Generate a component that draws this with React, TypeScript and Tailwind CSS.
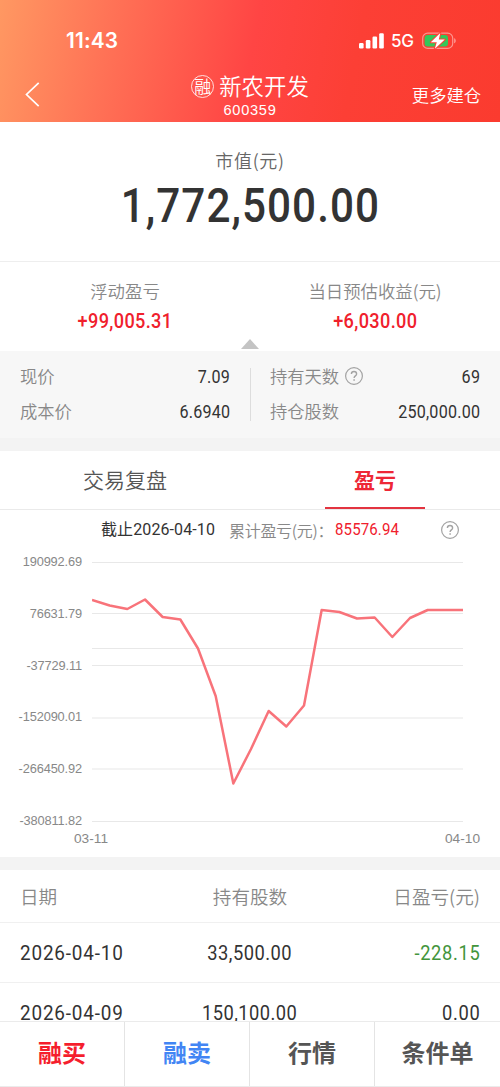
import type { ReactNode } from "react";

const CJK = "font-['Noto_Sans_CJK_SC',sans-serif]";
const NUM = "font-['Roboto','Noto_Sans_CJK_SC',sans-serif]";
const ARIAL = "font-['Liberation_Sans',sans-serif]";

function StatusBar() {
  return (
    <div className="flex h-[62px] items-start justify-between pl-[66px] pr-[43px] pt-[29px]">
      <span className="font-['Inter',sans-serif] text-[20.800px] font-semibold leading-6 tracking-[0.200px]">11:43</span>
      <div className="flex h-6 items-center">
        <svg width="25" height="16" viewBox="0 0 25 16" fill="white">
          <rect x="0" y="10" width="4.6" height="5.5" rx="1.2" />
          <rect x="6.8" y="7" width="4.6" height="8.5" rx="1.2" />
          <rect x="13.5" y="3.6" width="4.6" height="11.9" rx="1.2" />
          <rect x="20.2" y="0.2" width="4.6" height="15.3" rx="1.2" />
        </svg>
        <span className="ml-[7px] w-[25px] font-['Inter',sans-serif] text-[17px] font-medium leading-6 tracking-[-0.3px]">5G</span>
        <svg className="ml-[6px]" width="35" height="18" viewBox="0 0 35 18">
          <rect x="0.7" y="1.2" width="30" height="15.2" rx="5" fill="none" stroke="white" strokeOpacity="0.45" strokeWidth="1.2" />
          <path d="M32.2 6.3c2 .6 2 4.400 0 5z" fill="white" fillOpacity="0.5" />
          <rect x="2.600" y="3.100" width="23.400" height="11.400" rx="3.200" fill="#34c759" />
          <path d="M18.300 1 8.800 10.200h6L12.800 16.800 22.800 7.500h-6z" fill="white" stroke="#fb4238" strokeWidth="2" paintOrder="stroke" strokeLinejoin="round" />
        </svg>
      </div>
    </div>
  );
}

function Header() {
  return (
    <header className="h-[122px] bg-[linear-gradient(101deg,#ff9862_0%,#ff7256_22%,#ff4544_50%,#fc3f35_70%,#fb3b2f_100%)] text-white">
      <StatusBar />
      <div className="grid h-[60px] grid-cols-[120px_1fr_120px]">
        <div className="pl-[25px] pt-[20px]">
          <svg width="16" height="25" viewBox="0 0 16 25" fill="none" stroke="white" strokeWidth="1.700">
            <path d="M13.700 .8 1.500 12.500l12.200 11.700" />
          </svg>
        </div>
        <div className="flex flex-col items-center pt-[10px]">
          <div className="flex h-[28px] items-center gap-[5px]">
            <span className="flex size-[23px] items-center justify-center rounded-full border border-white/80">
              <span className={`${CJK} text-[17px] font-[350] leading-[20px]`}>融</span>
            </span>
            <span className={`${CJK} -mt-[2px] text-[22.400px] font-[350] leading-[28px]`}>新农开发</span>
          </div>
          <span className={`${ARIAL} mt-[1px] text-[14.600px] leading-[18px] tracking-[0.700px]`}>600359</span>
        </div>
        <div className={`${CJK} pr-[19px] pt-[21px] text-right text-[17.300px] font-[350] leading-[24px]`}>更多建仓</div>
      </div>
    </header>
  );
}

function HelpIcon() {
  return (
    <svg width="20" height="20" viewBox="0 0 20 20" fill="none" stroke="#a3a3a3">
      <circle cx="10" cy="10" r="8.400" strokeWidth="1.200" />
      <path d="M7.400 8c0-1.500 1.100-2.500 2.600-2.500s2.600 1 2.600 2.400c0 1.900-2.500 2-2.500 4" strokeWidth="1.400" />
      <path d="M10.100 13.200v1.600" strokeWidth="1.500" />
    </svg>
  );
}

function Profit({ label, value }: { label: string; value: string }) {
  return (
    <div className="flex flex-1 flex-col items-center pt-[17px]">
      <span className={`${CJK} text-[17.400px] font-[350] leading-[24px] text-[#888]`}>{label}</span>
      <span className={`${NUM} mt-[6px] scale-x-[0.93] text-[19.500px] font-medium leading-[26px] tracking-[0.380px] text-[#f0202c]`}>{value}</span>
    </div>
  );
}

function Stat({ label, value }: { label: ReactNode; value: string }) {
  return (
    <div className="flex h-[35px] items-center justify-between">
      <span className={`${CJK} -mt-[2px] flex items-center gap-[5px] text-[17.300px] font-[350] leading-[24px] text-[#888]`}>{label}</span>
      <span className={`${NUM} origin-right scale-x-[0.92] text-[17.500px] leading-[24px] tracking-[0.250px] text-[#333]`}>{value}</span>
    </div>
  );
}

const axis = ["190992.69", "76631.79", "-37729.11", "-152090.01", "-266450.92", "-380811.82"];
const grid = [12.5, 63.5, 98.5, 115.5, 168, 219, 271.5];
const series = [
  50, 55.5, 59, 49.5, 67, 69.5, 98.5, 146, 233.5, 199, 161, 176.5, 155.5, 60, 62, 68.5, 67.5, 87, 68, 60, 60, 60,
];
const linePoints = series.map((y, i) => `${(i * 371) / 21},${y}`).join(" ");

function Chart() {
  return (
    <div className={`${ARIAL} text-[#888]`}>
      <div className="flex h-[284px]">
        <div className="-mt-[14px] w-[82px] text-right text-[12.800px] tracking-[-0.130px]">
          {axis.map((v) => (
            <div key={v} className="flex h-[51.700px] items-center justify-end">{v}</div>
          ))}
        </div>
        <svg className="ml-[10px]" width="371" height="284" viewBox="0 0 371 284">
          {grid.map((y) => (
            <path key={y} d={`M0 ${y}H371`} stroke="#e8e8e8" strokeWidth="1.200" />
          ))}
          <polyline points={linePoints} fill="none" stroke="#f8737a" strokeWidth="2.500" strokeLinejoin="round" />
        </svg>
      </div>
      <div className="-mt-[4px] flex justify-between pl-[74px] pr-[20px] text-[13.700px] leading-[18px]">
        <span>03-11</span>
        <span>04-10</span>
      </div>
    </div>
  );
}

const records = [
  { date: "2026-04-10", shares: "33,500.00", profit: "-228.15", color: "text-[#43953c]" },
  { date: "2026-04-09", shares: "150,100.00", profit: "0.00", color: "text-[#333]" },
];

const actions = [
  { label: "融买", color: "text-[#f51e2d]" },
  { label: "融卖", color: "text-[#4285f4]" },
  { label: "行情", color: "text-[#555]" },
  { label: "条件单", color: "text-[#555]" },
];

export default function App() {
  return (
    <div className="flex h-[1087px] w-[500px] flex-col overflow-hidden bg-white">
      <Header />
      <section className="flex h-[140px] flex-col items-center border-b border-[#eee] pt-[26px]">
        <span className={`${CJK} text-[18px] font-[350] leading-[24px] tracking-[0.700px] text-[#666]`}>市值(元)</span>
        <span className={`${NUM} mt-[4px] scale-x-[0.88] text-[48px] font-medium leading-[60px] tracking-[1.200px] text-[#333]`}>1,772,500.00</span>
      </section>
      <section className="flex h-[77px]">
        <Profit label="浮动盈亏" value="+99,005.31" />
        <Profit label="当日预估收益(元)" value="+6,030.00" />
      </section>
      <div className="flex h-[12px] justify-center">
        <svg width="18" height="10" viewBox="0 0 18 10">
          <path d="M9 0l9 10H0z" fill="#c4c4c4" />
        </svg>
      </div>
      <section className="grid h-[87px] grid-cols-2 bg-[#f7f7f7] pt-[8px]">
        <div className="pl-[20px] pr-[20px]">
          <Stat label="现价" value="7.09" />
          <Stat label="成本价" value="6.6940" />
        </div>
        <div className="flex">
          <div className="mt-[9px] h-[53px] w-px bg-[#ddd]" />
          <div className="flex-1 pl-[19px] pr-[20px]">
            <Stat label={<>持有天数<HelpIcon /></>} value="69" />
            <Stat label="持仓股数" value="250,000.00" />
          </div>
        </div>
      </section>
      <div className="h-[13px] bg-[#f3f3f3]" />
      <nav className={`${CJK} flex h-[59px] border-b border-[#eaeaea] text-[21px] leading-[57px]`}>
        <div className="flex-1 text-center font-[350] text-[#555]">交易复盘</div>
        <div className="flex flex-1 justify-center">
          <div className="h-[58px] w-[100px] border-b-2 border-[#e33440] text-center font-bold text-[#ee2736]">盈亏</div>
        </div>
      </nav>
      <section className="h-[347px]">
        <div className={`${NUM} flex h-[40px] items-center pl-[101px] pr-[40px] text-[16px]`}>
          <span className="w-[128px] whitespace-nowrap tracking-[0.100px] text-[#333]">截止2026-04-10</span>
          <span className={`${CJK} -mt-[1px] w-[106px] whitespace-nowrap font-[350] tracking-[-0.300px] text-[#888]`}>累计盈亏(元)：</span>
          <span className="origin-left scale-x-[0.94] tracking-[0.130px] text-[#f0202c]">85576.94</span>
          <span className="ml-auto"><HelpIcon /></span>
        </div>
        <Chart />
      </section>
      <div className="h-[13px] bg-[#f3f3f3]" />
      <section className="h-[151px]">
        <div className={`${CJK} grid h-[53px] grid-cols-3 items-center border-b border-[#f0f0f0] px-[20px] text-[18.600px] font-[350] text-[#888]`}>
          <span>日期</span>
          <span className="text-center">持有股数</span>
          <span className="text-right">日盈亏(元)</span>
        </div>
        {records.map((r) => (
          <div key={r.date} className={`${NUM} grid h-[60px] grid-cols-3 items-center border-b border-[#f0f0f0] px-[20px] pt-[2px] text-[19.700px] leading-[16px] text-[#333]`}>
            <span className="origin-left scale-x-[0.96] tracking-[0.850px]">{r.date}</span>
            <span className="scale-x-[0.93] text-center tracking-[0.500px]">{r.shares}</span>
            <span className={`origin-right scale-x-[0.93] text-right tracking-[0.700px] ${r.color}`}>{r.profit}</span>
          </div>
        ))}
      </section>
      <footer className={`${CJK} relative z-10 grid h-[66px] grid-cols-4 divide-x divide-[#e4e4e4] border-b border-t border-[#ebebeb] bg-white text-center text-[24px] font-bold leading-[60px]`}>
        {actions.map((a) => (
          <div key={a.label} className={a.color}>{a.label}</div>
        ))}
      </footer>
    </div>
  );
}
